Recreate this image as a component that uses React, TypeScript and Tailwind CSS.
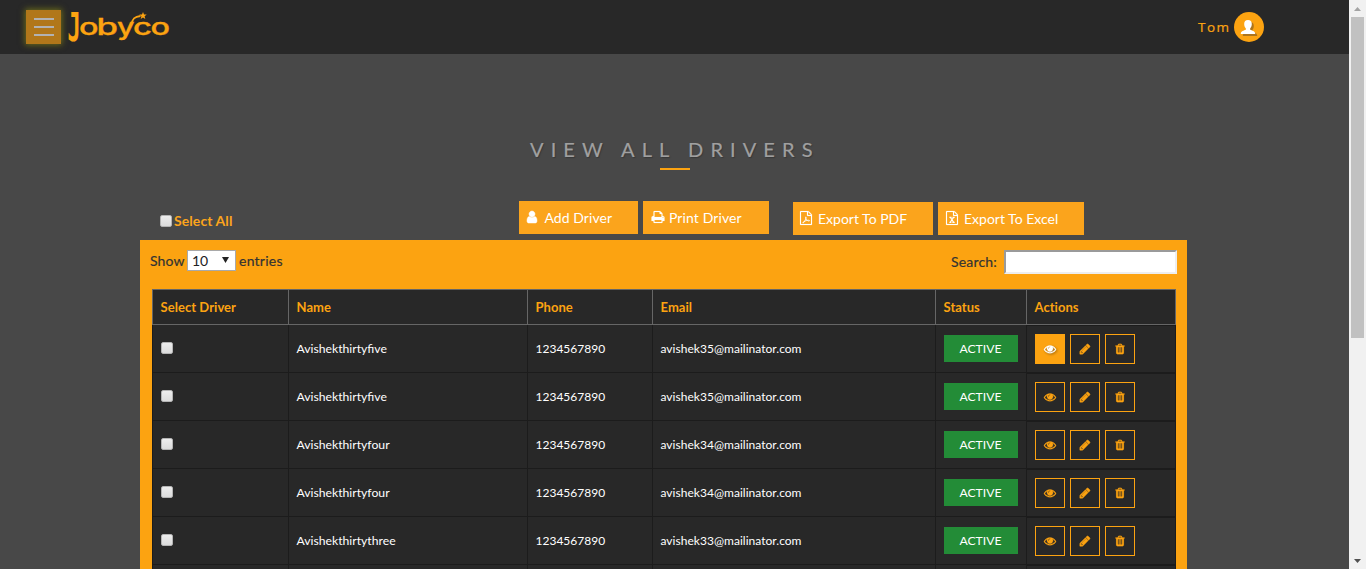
import React from "react";

const EYE =
  "M1664 960q-152-236-381-353 61 104 61 225 0 185-131.5 316.5t-316.5 131.5-316.5-131.5-131.5-316.5q0-121 61-225-229 117-381 353 133 205 333.5 326.5t434.5 121.5 434.5-121.5 333.5-326.5zm-720-384q0-20-14-34t-34-14q-125 0-214.5 89.5t-89.5 214.5q0 20 14 34t34 14 34-14 14-34q0-86 61-147t147-61q20 0 34-14t14-34zm848 384q0 34-20 69-140 230-376.5 368.5t-499.5 138.5-499.5-139-376.5-368q-20-35-20-69t20-69q140-229 376.5-368t499.5-139 499.5 139 376.5 368q20 35 20 69z";
const PENCIL =
  "M491 1536l91-91-235-235-91 91v107h128v128h107zm523-928q0-22-22-22-10 0-17 7l-542 542q-7 7-7 17 0 22 22 22 10 0 17-7l542-542q7-7 7-17zm-54-192l416 416-832 832h-416v-416zm683 96q0 53-37 90l-166 166-416-416 166-165q36-38 90-38 53 0 91 38l235 234q37 39 37 91z";
const TRASH =
  "M704 1376v-704q0-14-9-23t-23-9h-64q-14 0-23 9t-9 23v704q0 14 9 23t23 9h64q14 0 23-9t9-23zm256 0v-704q0-14-9-23t-23-9h-64q-14 0-23 9t-9 23v704q0 14 9 23t23 9h64q14 0 23-9t9-23zm256 0v-704q0-14-9-23t-23-9h-64q-14 0-23 9t-9 23v704q0 14 9 23t23 9h64q14 0 23-9t9-23zm-544-992h448l-48-117q-7-9-17-11h-317q-10 2-17 11zm928 32v64q0 14-9 23t-23 9h-96v948q0 83-47 143.5t-113 60.5h-832q-66 0-113-58.5t-47-141.5v-952h-96q-14 0-23-9t-9-23v-64q0-14 9-23t23-9h309l70-167q15-37 54-63t79-26h320q40 0 79 26t54 63l70 167h309q14 0 23 9t9 23z";
const USER =
  "M1536 1399q0 109-62.5 187t-150.5 78h-854q-88 0-150.5-78t-62.5-187q0-85 8.5-160.5t31.5-152 58.5-131 94-89 134.5-34.5q131 128 313 128t313-128q76 0 134.5 34.5t94 89 58.5 131 31.5 152 8.5 160.5zm-256-887q0 159-112.5 271.5t-271.5 112.5-271.5-112.5-112.5-271.5 112.5-271.5 271.5-112.5 271.5 112.5 112.5 271.5z";
const PRINT =
  "M448 1536h896v-256h-896v256zm0-640h896v-384h-160q-40 0-68-28t-28-68v-160h-640v640zm1152 64q0-26-19-45t-45-19-45 19-19 45 19 45 45 19 45-19 19-45zm128 0v416q0 13-9.5 22.5t-22.5 9.5h-224v160q0 40-28 68t-68 28h-960q-40 0-68-28t-28-68v-160h-224q-13 0-22.5-9.5t-9.5-22.5v-416q0-79 56.5-135.5t135.5-56.5h64v-544q0-40 28-68t68-28h672q40 0 88 20t76 48l152 152q28 28 48 76t20 88v256h64q79 0 135.5 56.5t56.5 135.5z";
const FILE =
  "M1596 380q28 28 48 76t20 88v1152q0 40-28 68t-68 28h-1344q-40 0-68-28t-28-68v-1600q0-40 28-68t68-28h896q40 0 88 20t76 48zm-444-244v376h376q-10-29-22-41l-313-313q-12-12-41-22zm384 1528v-1024h-416q-40 0-68-28t-28-68v-416h-768v1536h1280z";

function Icon({ d, className, children, weight = 0 }: { d: string; className: string; children?: React.ReactNode; weight?: number }) {
  return (
    <svg viewBox="0 0 1792 1792" className={"overflow-visible " + className} fill="currentColor" aria-hidden="true">
      <path d={d} stroke="currentColor" strokeWidth={weight} />
      {children}
    </svg>
  );
}

function Logo() {
  return (
    <svg viewBox="66 0 108 54" className="ml-[5px] h-[54px] w-[108px]" role="img" aria-label="Jobyco">
      <g fill="#fca311" stroke="#fca311">
        <text transform="translate(67.500 41.300) scale(0.560 1)" fontSize="39" fontFamily="DejaVu Sans Mono, monospace" fontWeight="700" strokeWidth="0.200">
          J
        </text>
        <g fontFamily="Inter, sans-serif" fontWeight="500" fontSize="23" strokeWidth="0.300">
          <text x="79" y="35" textLength="19.500" lengthAdjust="spacingAndGlyphs">o</text>
          <text x="96.500" y="35" textLength="21.500" lengthAdjust="spacingAndGlyphs">b</text>
          <text x="117" y="35" textLength="17.500" lengthAdjust="spacingAndGlyphs">y</text>
          <text x="133" y="35" textLength="19" lengthAdjust="spacingAndGlyphs">c</text>
          <text x="150.500" y="35" textLength="19.500" lengthAdjust="spacingAndGlyphs">o</text>
        </g>
      </g>
      <path d="M131.500 25C132 19 134.500 16.500 140.500 16" fill="none" stroke="#fca311" strokeWidth="1.800" />
      <path d="M143 12l1 2.500 2.700.1-2.100 1.700.7 2.600-2.300-1.500-2.300 1.500.7-2.600-2.100-1.700 2.700-.1z" fill="#fca311" />
    </svg>
  );
}

function Checkbox({ className }: { className: string }) {
  return (
    <span
      role="checkbox"
      aria-checked="false"
      className={"block h-3 w-3 shrink-0 rounded-[2px] border border-[#b4b4b4] bg-gradient-to-b from-[#ededed] to-[#dcdcdc] " + className}
    />
  );
}

const PERSON =
  "M14 8c-2.600 0-3.800 1.600-3.800 4 0 1.700.6 3.300 1.600 4.200v1.600c-1.700.7-5 1.500-5 3.700V22h14.400v-.5c0-2.200-3.300-3-5-3.700v-1.600c1-.9 1.600-2.500 1.600-4.200 0-2.400-1.200-4-3.800-4z";

function Header() {
  return (
    <header className="flex h-[54px] shrink-0 items-start bg-[#282828]">
      <button className="ml-[26px] mt-[10px] flex h-[34px] w-[35px] flex-col items-center justify-center gap-[6px] bg-[#b1771a] shadow-[0_0_6px_1px_rgba(130,130,20,0.75)]">
        <span className="ml-[1px] h-[2px] w-5 bg-[#b2b2b2]" />
        <span className="ml-[1px] h-[2px] w-5 bg-[#b2b2b2]" />
        <span className="ml-[1px] h-[2px] w-5 bg-[#b2b2b2]" />
      </button>
      <Logo />
      <div className="ml-auto mr-[85px] mt-3 flex h-[30px] items-center">
        <span className="w-[36px] text-[13.500px] tracking-[1.500px] text-[#fca311] [-webkit-text-stroke:0.200px_#fca311] font-['Open_Sans',sans-serif]">Tom</span>
        <span className="flex h-[30px] w-[30px] items-center justify-center rounded-full bg-[#fca311]">
          <svg viewBox="0 0 30 30" className="h-[30px] w-[30px]">
            <path d={PERSON} transform="translate(2 2)" fill="#ad741c" />
            <path d={PERSON} fill="#fff" />
          </svg>
        </span>
      </div>
    </header>
  );
}

const toolButton = "flex h-[33px] items-center bg-[#fba41c] text-[14px] text-white whitespace-nowrap";

function Toolbar() {
  return (
    <div className="flex h-[39px] w-[1047px] items-start">
      <label className="flex w-[379px] items-center pl-5 pt-[10px] text-[14px] leading-5 font-bold tracking-[0.080px] text-[#fba41c]">
        <Checkbox className="mr-[2px]" />
        Select All
      </label>
      <button className={toolButton + " w-[119px] pl-[6px] tracking-[0.050px]"}>
        <Icon d={USER} weight={60} className="mr-[5.500px] mb-[2px] h-[14px] w-[14px]" />
        Add Driver
      </button>
      <button className={toolButton + " ml-[5px] w-[126px] pl-2 tracking-[0.100px]"}>
        <Icon d={PRINT} weight={20} className="mr-[4px] mb-[2px] h-[14px] w-[14px]" />
        Print Driver
      </button>
      <button className={toolButton + " ml-6 mt-px w-[140px] pl-[6px]"}>
        <Icon d={FILE} weight={20} className="mr-[5px] mb-[2px] h-[14px] w-[14px]">
          <path
            d="M860 760c-40 180 40 330 260 480 120 70 240 60 230-20-40-80-500-60-860 240-30 80 60 90 130 0 120-160 260-440 280-620 10-80-10-110-40-80z"
            fill="none"
            stroke="currentColor"
            strokeWidth="110"
          />
        </Icon>
        Export To PDF
      </button>
      <button className={toolButton + " ml-[5px] mt-px w-[146px] pl-[7px]"}>
        <Icon d={FILE} weight={20} className="mr-[5px] mb-[2px] h-[14px] w-[14px]">
          <path d="M560 800h280M960 800h280M560 1440h260M940 1440h300M680 800l430 640M1110 800L670 1440" fill="none" stroke="currentColor" strokeWidth="160" />
        </Icon>
        Export To Excel
      </button>
    </div>
  );
}

const columns = "grid grid-cols-[136px_239px_125px_283px_91px_150px]";

const drivers = [
  { name: "Avishekthirtyfive", email: "avishek35@mailinator.com" },
  { name: "Avishekthirtyfive", email: "avishek35@mailinator.com" },
  { name: "Avishekthirtyfour", email: "avishek34@mailinator.com" },
  { name: "Avishekthirtyfour", email: "avishek34@mailinator.com" },
  { name: "Avishekthirtythree", email: "avishek33@mailinator.com" },
];

const actionBox = "flex h-[30px] w-[30px] items-center justify-center border border-[#fca311] ";
const bodyCell = "flex items-center border-l border-b border-[#1c1c1c] ";

function DriverRow({ name, email, active }: { name: string; email: string; active: boolean }) {
  return (
    <div className={columns + " h-12 text-[12px] text-white"}>
      <div className="flex items-start border-l border-b border-[#1c1c1c] pl-2 pt-[17px]">
        <Checkbox className="" />
      </div>
      <div className={bodyCell + "pl-[7.500px] pt-[2px] text-[12.200px]"}>{name}</div>
      <div className={bodyCell + "pl-[7.500px]"}>1234567890</div>
      <div className={bodyCell + "pl-[7.500px] tracking-[0.030px]"}>{email}</div>
      <div className={bodyCell + "pl-2"}>
        <span className="flex h-[27px] w-[74px] items-center justify-center bg-[#238c37] pt-px pr-px text-[12.200px]">ACTIVE</span>
      </div>
      <div className="flex items-start gap-[5px] border border-[#1c1c1c] pl-2 pt-2">
        <button className={actionBox + (active ? "bg-[#fca311] text-white" : "text-[#fca311]")}>
          <Icon d={EYE} weight={50} className={"mr-px h-3 w-3" + (active ? " drop-shadow-[1px_1px_1px_rgba(0,0,0,0.4)]" : "")} />
        </button>
        <button className={actionBox + "text-[#fca311]"}>
          <Icon d={PENCIL} weight={70} className="h-3 w-3" />
        </button>
        <button className={actionBox + "text-[#fca311]"}>
          <Icon d={TRASH} weight={20} className="h-3 w-3" />
        </button>
      </div>
    </div>
  );
}

function DriverPanel() {
  return (
    <section className="w-[1047px] bg-[#fca311]">
      <div className="flex h-[49px] items-start pl-[10px] pr-[10px] pt-[10px] text-[14px] leading-5 text-[#333]">
        <span className="w-[37px] pt-px tracking-[0.100px] [-webkit-text-stroke:0.200px_#333]">Show</span>
        <span className="flex h-[21px] w-[49px] items-center justify-between border border-[#a9a9a9] bg-white pl-[4px] pr-[6px] text-[14px] text-[#222]">
          10
          <svg viewBox="0 0 7 6" className="mb-[2px] h-[6px] w-[7px]">
            <path d="M0 0h7L3.500 6z" fill="#222" />
          </svg>
        </span>
        <span className="ml-[3px] pt-px tracking-[0.250px] [-webkit-text-stroke:0.200px_#333]">entries</span>
        <span className="ml-auto mr-[7px] pt-[2px] tracking-[0.200px] [-webkit-text-stroke:0.200px_#333]">Search:</span>
        <input className="h-6 w-[173px] border-2 border-t-[#9a9a9a] border-l-[#9a9a9a] border-r-[#eee] border-b-[#eee] bg-white" />
      </div>
      <div className="mx-3 w-[1024px] bg-[#282828]">
        <div className={columns + " h-9 border-y border-r border-[#666] text-[13px] font-bold text-[#fca311]"}>
          {["Select Driver", "Name", "Phone", "Email", "Status", "Actions"].map((label) => (
            <div key={label} className="flex items-center border-l border-[#666] pl-[7.500px] pt-[2px] tracking-[0.050px]">
              {label}
            </div>
          ))}
        </div>
        {drivers.map((d, i) => (
          <DriverRow key={i} name={d.name} email={d.email} active={i === 0} />
        ))}
        <div className={columns + " h-4"}>
          {[0, 1, 2, 3, 4].map((c) => (
            <div key={c} className="border-l border-[#1c1c1c]" />
          ))}
          <div className="border-x border-t border-[#1c1c1c]" />
        </div>
      </div>
    </section>
  );
}

function Scrollbar() {
  return (
    <div className="flex h-[569px] w-[17px] shrink-0 flex-col items-center bg-[#f1f1f1]">
      <div className="flex h-[17px] items-center">
        <svg viewBox="0 0 7 4" className="h-1 w-[7px]">
          <path d="M0 4L3.500 0 7 4z" fill="#a3a3a3" />
        </svg>
      </div>
      <div className="h-[321px] w-[13px] bg-[#c1c1c1]" />
      <div className="mt-auto flex h-[17px] items-center">
        <svg viewBox="0 0 7 4" className="h-1 w-[7px]">
          <path d="M0 0h7L3.500 4z" fill="#505050" />
        </svg>
      </div>
    </div>
  );
}

export default function App() {
  return (
    <div className="flex h-[569px] w-[1366px] overflow-hidden bg-[#484848] font-[Lato,sans-serif]">
      <div className="flex h-[569px] w-[1349px] flex-col overflow-hidden">
        <Header />
        <main className="flex flex-col pl-[140px]">
          <div className="ml-[390px] mt-[80px] flex h-[67px] w-[300px] flex-col items-start">
            <h1 className="whitespace-nowrap text-[20px] leading-[30px] tracking-[7.100px] text-[#a0a0a0] [-webkit-text-stroke:0.200px_#a0a0a0] [text-shadow:1px_1px_1px_#383838]">
              VIEW ALL DRIVERS
            </h1>
            <span className="ml-[130px] mt-[4px] h-[2px] w-[30px] bg-[#fca311]" />
          </div>
          <Toolbar />
          <DriverPanel />
        </main>
      </div>
      <Scrollbar />
    </div>
  );
}
